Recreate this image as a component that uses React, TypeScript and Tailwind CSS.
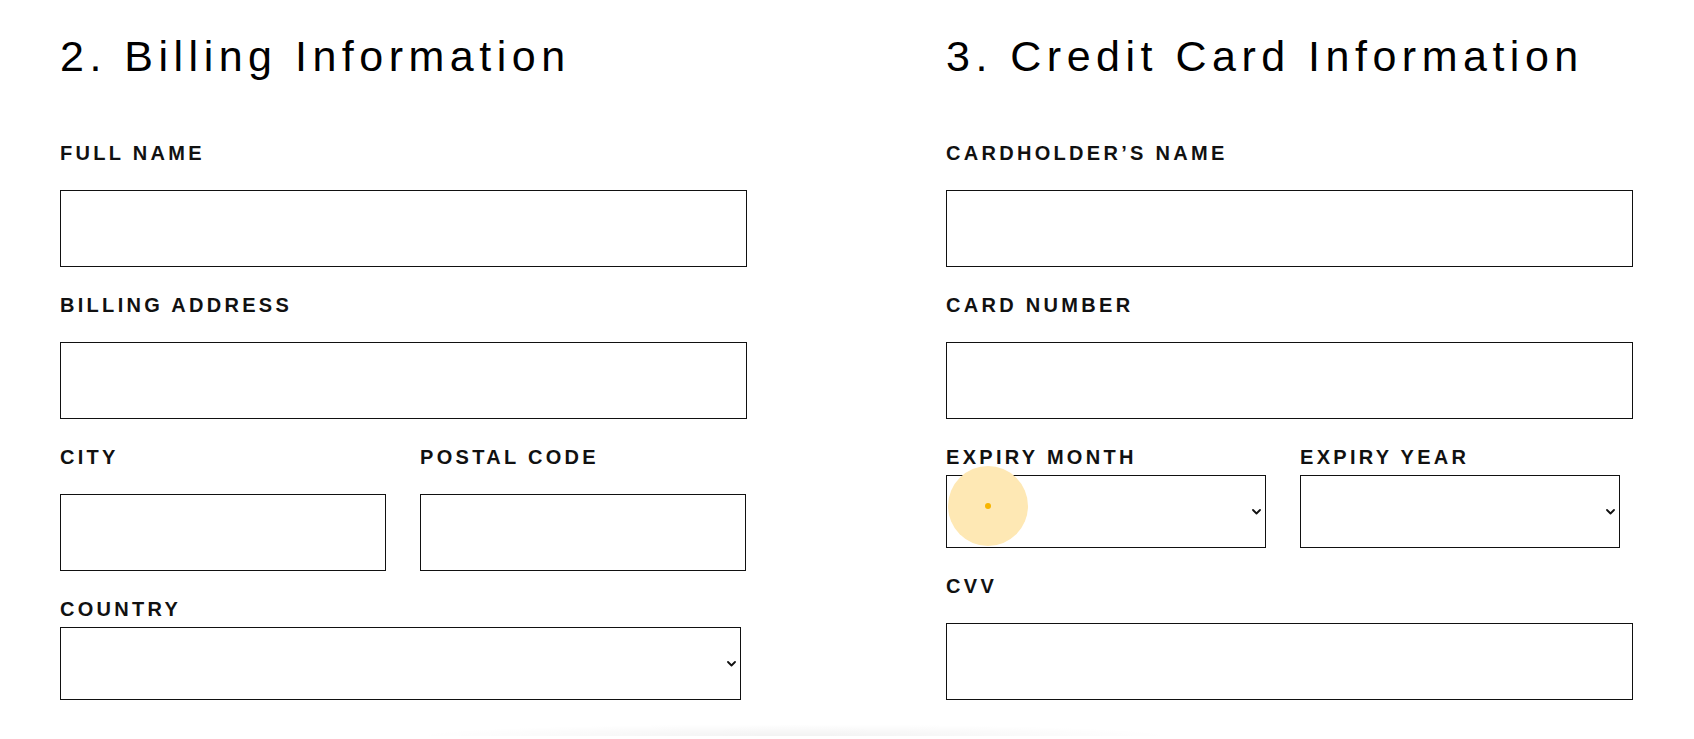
import type { ReactNode } from "react";

const font = { fontFamily: '"Liberation Sans", Arial, Helvetica, sans-serif' };

function Label({ children, tight }: { children: ReactNode; tight?: boolean }) {
    return (
        <label className={`block text-[20px] leading-6 font-bold tracking-[3.3px] text-[#111] ${tight ? "mb-[6px]" : "mb-[25px]"}`}>
            {children}
        </label>
    );
}

function TextField({ label }: { label: string }) {
    return (
        <div>
            <Label>{label}</Label>
            <input type="text" className="block w-full h-[77px] border border-[#111] bg-white outline-none px-3" />
        </div>
    );
}

function Chevron() {
    return (
        <svg width="9" height="6" viewBox="0 0 9 6" className="pointer-events-none absolute right-[5px] top-1/2 -translate-y-1/2">
            <path d="M1 1l3.5 3.5L8 1" fill="none" stroke="#111" strokeWidth="1.8" strokeLinecap="round" strokeLinejoin="round" />
        </svg>
    );
}

function SelectField({ label, width }: { label: string; width: string }) {
    return (
        <div>
            <Label tight>{label}</Label>
            <div className={`relative h-[73px] ${width}`}>
                <select className="block w-full h-full appearance-none border border-[#111] bg-white outline-none rounded-none px-3">
                    <option value=""></option>
                </select>
                <Chevron />
            </div>
        </div>
    );
}

export default function App() {
    return (
        <div className="relative w-[1694px] h-[739px] overflow-hidden bg-white text-black" style={font}>
            <div className="grid grid-cols-[687px_687px] gap-x-[199px] px-[60px] pt-[31px]">
                {/* billing */}
                <section>
                    <h2 className="text-[43px] leading-[50px] font-normal tracking-[5.5px] mb-[60px]">2. Billing Information</h2>
                    <div className="flex flex-col gap-[26px]">
                        <TextField label="FULL NAME" />
                        <TextField label="BILLING ADDRESS" />
                        <div className="grid grid-cols-2 gap-x-[34px] w-[686px]">
                            <TextField label="CITY" />
                            <TextField label="POSTAL CODE" />
                        </div>
                        <SelectField label="COUNTRY" width="w-[681px]" />
                    </div>
                </section>

                {/* credit card */}
                <section>
                    <h2 className="text-[43px] leading-[50px] font-normal tracking-[5.5px] mb-[60px]">3. Credit Card Information</h2>
                    <div className="flex flex-col gap-[26px]">
                        <TextField label="CARDHOLDER’S NAME" />
                        <TextField label="CARD NUMBER" />
                        <div className="grid grid-cols-2 gap-x-[34px] w-[674px]">
                            <SelectField label="EXPIRY MONTH" width="w-full" />
                            <SelectField label="EXPIRY YEAR" width="w-full" />
                        </div>
                        <TextField label="CVV" />
                    </div>
                </section>
            </div>

            {/* faint shadow peeking from below */}
            <div className="mt-[24px] ml-[410px] w-[770px] h-[12px] bg-[radial-gradient(ellipse_at_bottom,rgba(0,0,0,0.05),transparent_70%)]" />

            {/* click highlight */}
            <div className="absolute left-[948px] top-[466px] w-[80px] h-[80px] rounded-full bg-[#fee8b4] flex items-center justify-center">
                <div className="w-[6px] h-[6px] rounded-full bg-[#f7b500]" />
            </div>
        </div>
    );
}
